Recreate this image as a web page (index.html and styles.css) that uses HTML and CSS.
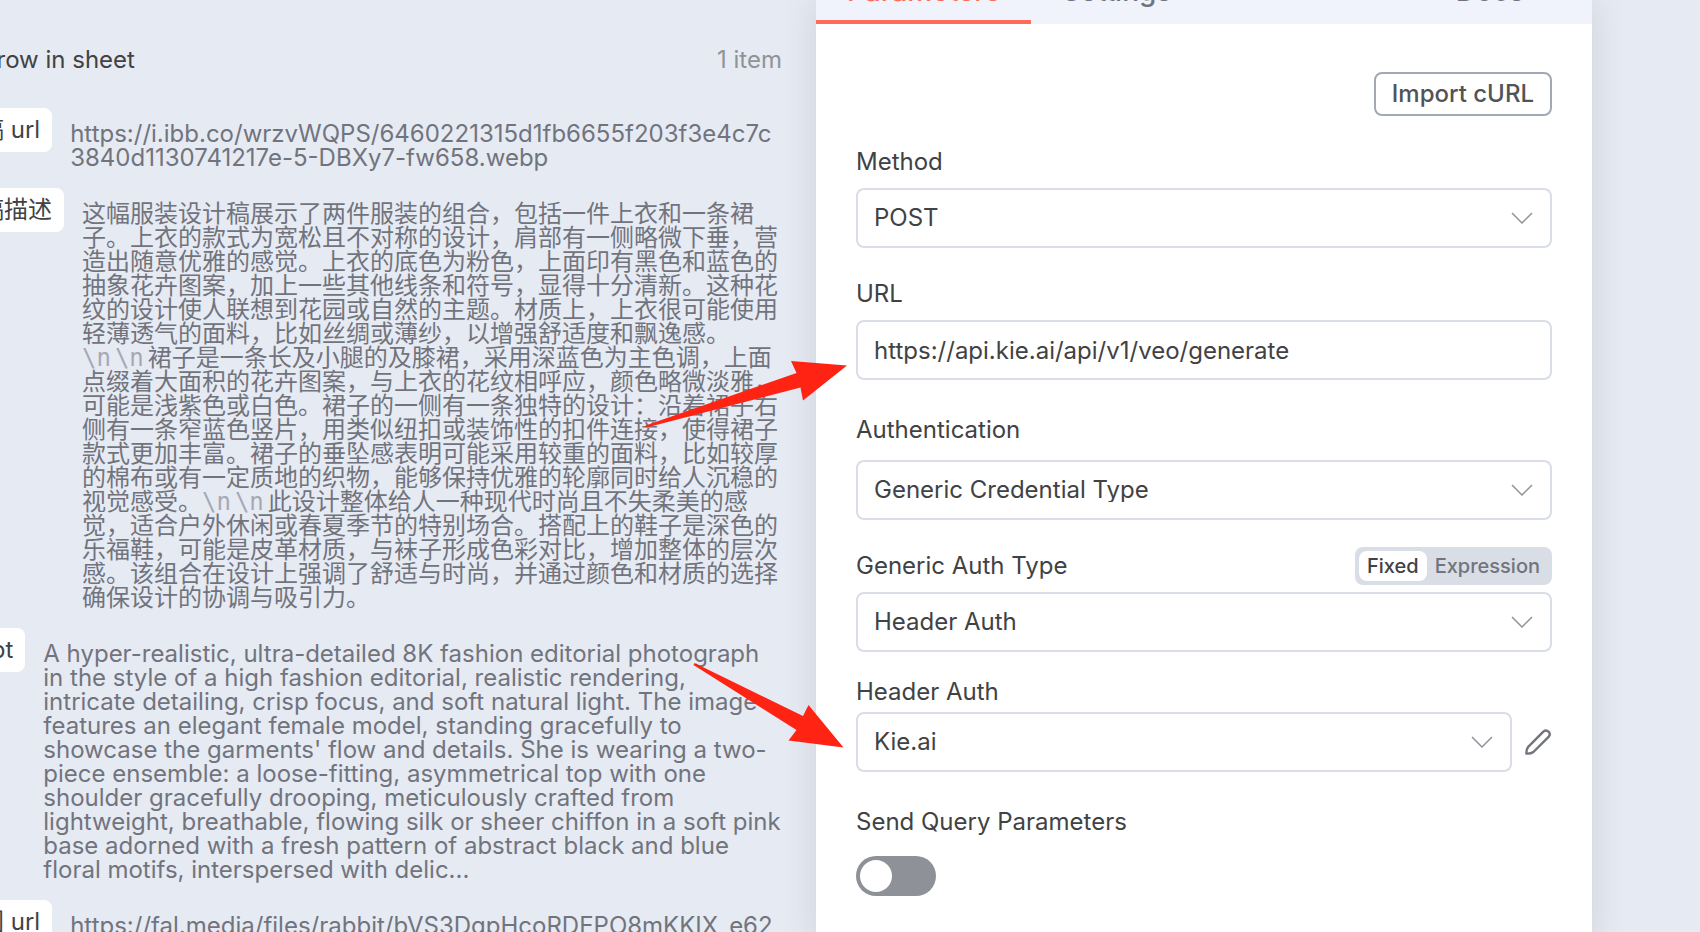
FILE: index.html
```html
<!DOCTYPE html>
<html lang="en">
<head>
<meta charset="utf-8">
<title>HTTP Request</title>
<link rel="stylesheet" href="styles.css">
</head>
<body>
<div class="editor">
  <section class="input-pane" aria-label="Input data">
    <header class="source">
      <h2 class="source-name">Get row in sheet</h2>
      <span class="source-count">1 item</span>
    </header>
    <div class="schema">
      <div class="row"><span class="pill">设计稿 url</span><p class="value break">https://i.ibb.co/wrzvWQPS/6460221315d1fb6655f203f3e4c7c3840d1130741217e-5-DBXy7-fw658.webp</p></div>
      <div class="row"><span class="pill">设计稿描述</span><p class="value" lang="zh-CN">这幅服装设计稿展示了两件服装的组合，包括一件上衣和一条裙子。上衣的款式为宽松且不对称的设计，肩部有一侧略微下垂，营造出随意优雅的感觉。上衣的底色为粉色，上面印有黑色和蓝色的抽象花卉图案，加上一些其他线条和符号，显得十分清新。这种花纹的设计使人联想到花园或自然的主题。材质上，上衣很可能使用轻薄透气的面料，比如丝绸或薄纱，以增强舒适度和飘逸感。<wbr><span class="nl">\n</span><span class="nl">\n</span>裙子是一条长及小腿的及膝裙，采用深蓝色为主色调，上面点缀着大面积的花卉图案，与上衣的花纹相呼应，颜色略微淡雅，可能是浅紫色或白色。裙子的一侧有一条独特的设计：沿着裙子右侧有一条窄蓝色竖片，用类似纽扣或装饰性的扣件连接，使得裙子款式更加丰富。裙子的垂坠感表明可能采用较重的面料，比如较厚的棉布或有一定质地的织物，能够保持优雅的轮廓同时给人沉稳的视觉感受。<span class="nl">\n</span><span class="nl">\n</span>此设计整体给人一种现代时尚且不失柔美的感觉，适合户外休闲或春夏季节的特别场合。搭配上的鞋子是深色的乐福鞋，可能是皮革材质，与袜子形成色彩对比，增加整体的层次感。该组合在设计上强调了舒适与时尚，并通过颜色和材质的选择确保设计的协调与吸引力。</p></div>
      <div class="row"><span class="pill">prompt</span><p class="value">A hyper-realistic, ultra-detailed 8K fashion editorial photograph in the style of a high fashion editorial, realistic rendering, intricate detailing, crisp focus, and soft natural light. The image features an elegant female model, standing gracefully to showcase the garments' flow and details. She is wearing a two-piece ensemble: a loose-fitting, asymmetrical top with one shoulder gracefully drooping, meticulously crafted from lightweight, breathable, flowing silk or sheer chiffon in a soft pink base adorned with a fresh pattern of abstract black and blue floral motifs, interspersed with delic...</p></div>
      <div class="row"><span class="pill">设计图 url</span><p class="value break">https://fal.media/files/rabbit/bVS3DgpHcoRDEPO8mKKIX_e62</p></div>
    </div>
  </section>

  <main class="panel">
    <nav class="tabs">
      <a class="tab active" href="#parameters">Parameters</a>
      <a class="tab" href="#settings">Settings</a>
      <a class="tab docs" href="#docs">Docs</a>
    </nav>
    <form class="form">
      <button class="import" type="button">Import cURL</button>

      <div class="field">
        <label for="method">Method</label>
        <div class="select"><select id="method"><option>POST</option></select><svg viewBox="0 0 22 12" aria-hidden="true"><path d="M1 1l10 10L21 1"/></svg></div>
      </div>
      <div class="field">
        <label for="url">URL</label>
        <input id="url" class="text" type="text" value="https://api.kie.ai/api/v1/veo/generate">
      </div>
      <div class="field roomy">
        <label for="auth">Authentication</label>
        <div class="select"><select id="auth"><option>Generic Credential Type</option></select><svg viewBox="0 0 22 12" aria-hidden="true"><path d="M1 1l10 10L21 1"/></svg></div>
      </div>
      <div class="field tight">
        <div class="label-line">
          <label for="auth-type">Generic Auth Type</label>
          <div class="mode" role="group" aria-label="Value mode">
            <button type="button" aria-pressed="true">Fixed</button>
            <button type="button" aria-pressed="false">Expression</button>
          </div>
        </div>
        <div class="select"><select id="auth-type"><option>Header Auth</option></select><svg viewBox="0 0 22 12" aria-hidden="true"><path d="M1 1l10 10L21 1"/></svg></div>
      </div>
      <div class="field close">
        <label for="credential">Header Auth</label>
        <div class="credential">
          <div class="select"><select id="credential"><option>Kie.ai</option></select><svg viewBox="0 0 22 12" aria-hidden="true"><path d="M1 1l10 10L21 1"/></svg></div>
          <button class="edit" type="button" aria-label="Edit credential"><svg viewBox="0 0 28 28" aria-hidden="true"><path d="M2.400 25.600Q2.200 21.500 4.200 18.800L19.600 3.400a3.700 3.700 0 0 1 5.200 5.200L9.400 24Q6.500 26 2.400 25.600z"/></svg></button>
        </div>
      </div>
      <div class="field toggle">
        <label for="send-query">Send Query Parameters</label>
        <input id="send-query" class="switch" type="checkbox" role="switch">
      </div>
    </form>
    <svg class="arrow to-url" viewBox="0 0 204 68" aria-hidden="true"><path d="M1.500 65.500L152.500 13 147 1 203 5.500 159 40.500 156.500 27.500 2.500 67.500z"/></svg>
    <svg class="arrow to-credential" viewBox="0 0 152 86" aria-hidden="true"><path d="M2.500 1L111 54 116.500 43 151.500 85.500 96.500 78.500 104.500 68 1.500 3z"/></svg>
  </main>
</div>
</body>
</html>
```
FILE: styles.css
```css
* { box-sizing: border-box; }

body {
  margin: 0;
  background: #e6eaf3;
  color: #414244;
  font: 24px/24px Inter, "Noto Sans CJK SC", sans-serif;
}

.editor {
  display: grid;
  grid-template-columns: 816fr 776fr 108fr;
  height: 100vh;
  overflow: hidden;
}

/* Input data, scrolled to the left */
.input-pane {
  min-width: 0;
  margin-left: -80px;
  padding: 48px 34px 0 0;
}
.source {
  display: flex;
  justify-content: space-between;
  padding-left: 30px;
}
.source-name { margin: 0; font-size: 24px; font-weight: 400; }
.source-count { color: #909399; }
.schema {
  display: flex;
  flex-direction: column;
  gap: 18px;
  margin-top: 36px;
}
.row { display: flex; align-items: flex-start; gap: 18px; }
.pill {
  flex: none;
  padding: 10px 12px;
  border-radius: 8px;
  background: #fff;
}
.value {
  flex: 1;
  min-width: 0;
  margin: 0;
  padding-top: 14px;
  color: #71747d;
}
.break { word-break: break-all; }
.nl {
  margin-right: 4px;
  color: #a6a9b5;
  font-family: "DejaVu Sans Mono", monospace;
  line-height: 16px;
}

/* Node settings */
.panel {
  position: relative;
  background: #fff;
  box-shadow: 0 0 32px rgba(65, 66, 80, 0.15);
}
.tabs {
  display: flex;
  height: 64px;
  margin-top: -40px;
  background: #f0f3fb;
}
.tab {
  padding: 19px 31px 17px;
  border-bottom: 4px solid transparent;
  color: #71747d;
  font-size: 28px;
  font-weight: 500;
  text-decoration: none;
}
.tab.active { border-color: #ff6d5a; color: #ff6d5a; }
.docs { margin-left: auto; padding-right: 68px; }
.form {
  display: flex;
  flex-direction: column;
  padding: 48px 40px 36px;
}
.import {
  align-self: flex-end;
  height: 44px;
  padding: 0 16px;
  border: 2px solid #a3a8b7;
  border-radius: 8px;
  background: #fff;
  color: #525356;
  font: inherit;
  font-weight: 500;
}
.field {
  display: flex;
  flex-direction: column;
  gap: 14px;
  margin-top: 34px;
}
.roomy { gap: 18px; margin-top: 38px; }
.tight { gap: 7px; margin-top: 27px; }
.close { gap: 8px; margin-top: 28px; }
.toggle { gap: 22px; margin-top: 38px; }
.label-line { display: flex; align-items: center; justify-content: space-between; }

.select { display: grid; flex: 1; align-items: center; }
.select > * { grid-area: 1 / 1; }
.select svg {
  justify-self: end;
  width: 22px;
  height: 12px;
  margin-right: 19px;
  fill: none;
  stroke: #909399;
  stroke-width: 1.5;
  pointer-events: none;
}
select, .text {
  width: 100%;
  height: 60px;
  padding: 0 16px;
  border: 2px solid #d9dde8;
  border-radius: 8px;
  background: #fff;
  color: inherit;
  font: inherit;
  appearance: none;
}

.mode {
  display: flex;
  padding: 4px;
  border-radius: 8px;
  background: #d9dde6;
}
.mode button {
  height: 30px;
  padding: 0 8px;
  border: 0;
  border-radius: 8px;
  background: none;
  color: #71747d;
  font: inherit;
  font-size: 20px;
  font-weight: 500;
}
.mode button[aria-pressed="true"] { background: #fff; color: #414244; }

.credential { display: flex; align-items: center; gap: 12px; }
.edit { padding: 0; border: 0; background: none; }
.edit svg {
  display: block;
  width: 28px;
  height: 28px;
  fill: none;
  stroke: #71747d;
  stroke-width: 2.4;
  stroke-linejoin: round;
}

.switch {
  width: 80px;
  height: 40px;
  margin: 0;
  padding: 4px;
  border-radius: 20px;
  background: #8f9199;
  appearance: none;
}
.switch::before {
  content: "";
  display: block;
  width: 32px;
  height: 32px;
  border-radius: 50%;
  background: #fff;
}
.switch:checked::before { margin-left: auto; }

/* Callout arrows laid over both panes */
.arrow { position: absolute; fill: #ff2314; pointer-events: none; }
.to-url { top: 360px; left: -172px; width: 204px; height: 68px; }
.to-credential { top: 662px; left: -124px; width: 152px; height: 86px; }
```
